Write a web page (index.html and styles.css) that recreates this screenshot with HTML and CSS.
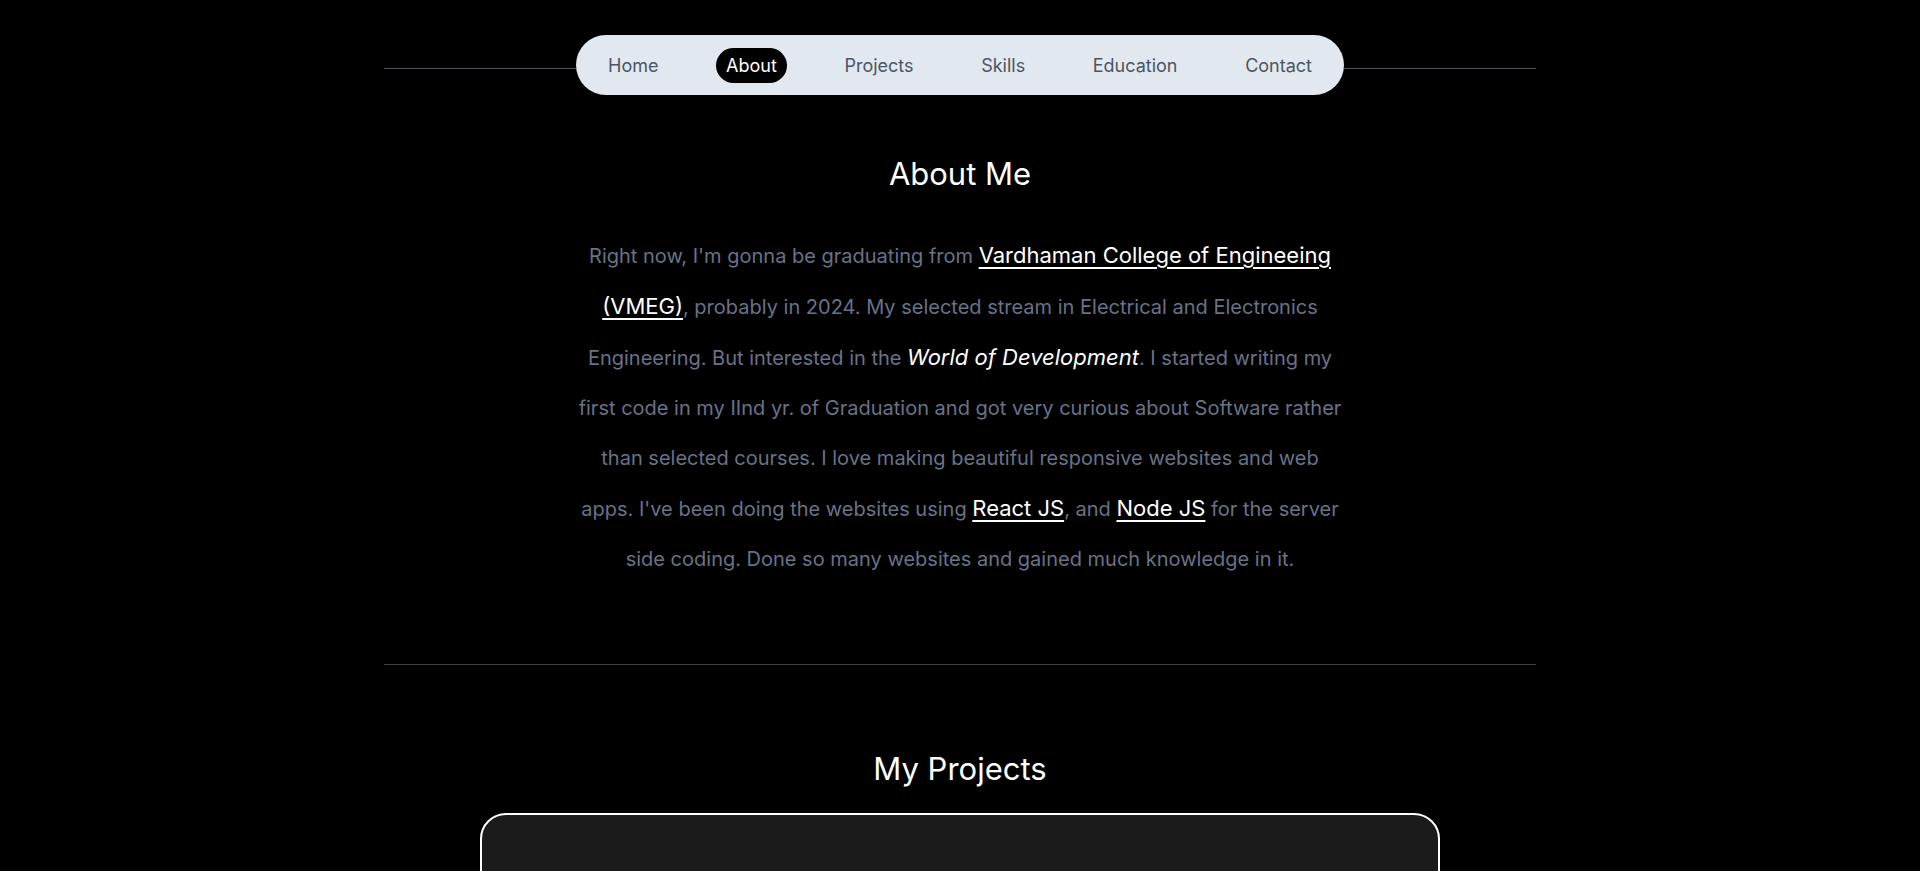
FILE: index.html
```html
<!DOCTYPE html>
<html lang="en">
<head>
<meta charset="utf-8">
<title>Portfolio</title>
<link rel="stylesheet" href="styles.css">
</head>
<body>
<header class="topbar">
  <span class="rule"></span>
  <nav class="pill">
    <a class="nav-item" href="#home">Home</a>
    <a class="nav-item active" href="#about">About</a>
    <a class="nav-item" href="#projects">Projects</a>
    <a class="nav-item" href="#skills">Skills</a>
    <a class="nav-item" href="#education">Education</a>
    <a class="nav-item" href="#contact">Contact</a>
  </nav>
  <span class="rule"></span>
</header>

<main>
  <section class="about" id="about">
    <h2 class="title">About Me</h2>
    <p class="bio">Right now, I'm gonna be graduating from <a class="hl" href="#">Vardhaman College of Engineeing (VMEG)</a>, probably in 2024. My selected stream in Electrical and Electronics Engineering. But interested in the <em class="em">World of Development</em>. I started writing my first code in my IInd yr. of Graduation and got very curious about Software rather than selected courses. I love making beautiful responsive websites and web apps. I've been doing the websites using <a class="hl" href="#">React JS</a>, and <a class="hl" href="#">Node JS</a> for the server side coding. Done so many websites and gained much knowledge in it.</p>
  </section>

  <hr class="divider">

  <section class="projects" id="projects">
    <h2 class="title">My Projects</h2>
    <div class="card"></div>
  </section>
</main>
</body>
</html>
```

FILE: styles.css
```css
* { box-sizing: border-box; }

html, body {
  margin: 0;
  padding: 0;
  background: #000;
  font-family: Inter, "Noto Sans", "Liberation Sans", sans-serif;
  color: #fff;
}

body { overflow: hidden; }

.topbar {
  width: 1152px;
  margin: 0 auto;
  padding-top: 35px;
  display: flex;
  align-items: flex-start;
}

.rule {
  flex: 1;
  height: 1px;
  margin-top: 33px;
  background: #4b5563;
}

.pill {
  width: 768px;
  height: 60px;
  padding: 0 22px;
  background: #e2e8f0;
  border-radius: 30px;
  display: flex;
  align-items: center;
  justify-content: space-between;
}

.nav-item {
  font-size: 18px;
  line-height: 27px;
  padding: 4px 10px;
  color: #4b5563;
  text-decoration: none;
  border-radius: 999px;
}

.nav-item.active {
  background: #000;
  color: #fff;
}

.about {
  display: flex;
  flex-direction: column;
  align-items: center;
  padding-top: 61px;
}

.title {
  margin: 0;
  font-size: 31px;
  line-height: 36px;
  font-weight: 400;
  color: #fff;
  text-align: center;
}

.bio {
  width: 768px;
  margin: 38px 0 0;
  font-size: 20px;
  line-height: 50px;
  color: #687386;
  text-align: center;
}

.hl {
  color: #fff;
  font-size: 22px;
  text-decoration: underline;
  text-decoration-thickness: 2px;
  text-underline-offset: 4px;
}

.em {
  color: #fff;
  font-size: 22px;
  font-style: italic;
}

.divider {
  width: 1152px;
  margin: 80px auto 0;
  border: 0;
  height: 1px;
  background: #3f444c;
}

.projects {
  display: flex;
  flex-direction: column;
  align-items: center;
  padding-top: 86px;
}

.card {
  width: 960px;
  height: 420px;
  margin-top: 26px;
  background: #1b1b1b;
  border: 2px solid #fff;
  border-radius: 26px;
}
```
